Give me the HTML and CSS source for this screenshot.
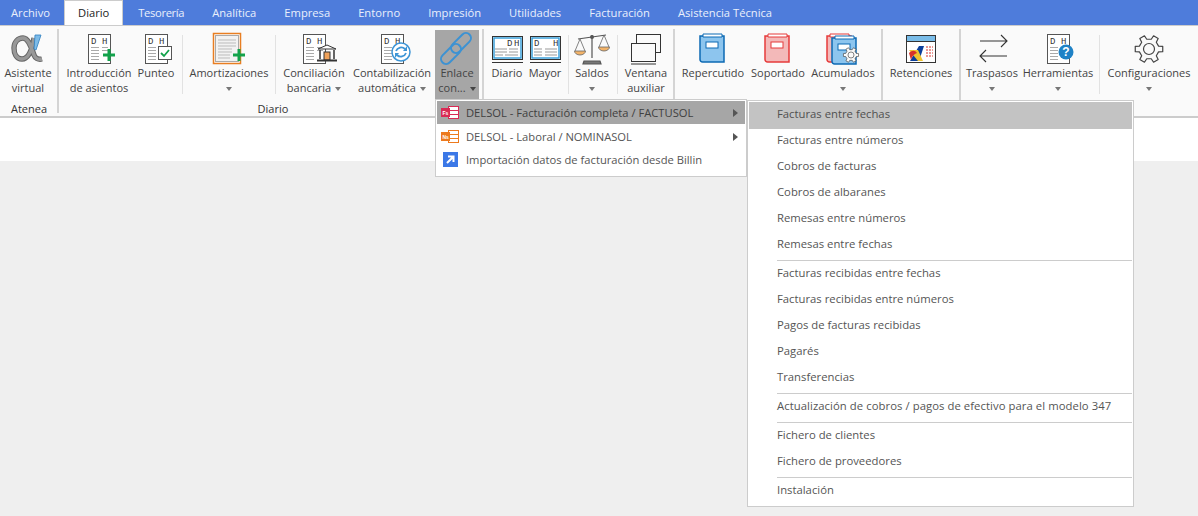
FILE: index.html
```html
<!DOCTYPE html>
<html lang="es">
<head>
<meta charset="utf-8">
<title>Diario</title>
<link rel="stylesheet" href="styles.css">
</head>
<body>
<svg class="defs" width="0" height="0" aria-hidden="true">
  <defs>
    <g id="doc">
      <rect x="0.5" y="0.5" width="22" height="29" fill="#fff" stroke="#555"/>
      <text x="3" y="9.5" class="dh">D</text>
      <text x="14" y="9.5" class="dh">H</text>
      <path d="M3 13.5h8M3 16.5h8M3 19.5h8M3 22.5h8M3 25.5h8M14 13.5h6M14 16.5h6" stroke="#aaa" fill="none"/>
    </g>
    <g id="wline">
      <rect x="0.5" y="0.5" width="30" height="23" fill="#fff" stroke="#333"/>
      <rect x="2" y="2" width="27" height="20" fill="#fff" stroke="#2f9bd8" stroke-width="1.4"/>
      <path d="M0 26.5h31" stroke="#333" fill="none"/>
    </g>
    <g id="book">
      <path d="M1 3h24v26H3.500a2.500 2.500 0 0 1-2.500-2.500z" stroke-width="1.500"/>
      <path d="M4 1h19v3H4z" fill="#fff" stroke-width="1"/>
      <rect x="7" y="9" width="12" height="6" fill="#fff" stroke-width="1"/>
    </g>
    <g id="gear">
      <path d="M9.56-2.92L13.74-2.67L13.74 2.67L9.56 2.92L7.31 6.82L9.18 10.57L4.56 13.23L2.25 9.74L-2.25 9.74L-4.56 13.23L-9.18 10.57L-7.31 6.82L-9.56 2.92L-13.74 2.67L-13.74-2.67L-9.56-2.92L-7.31-6.82L-9.18-10.57L-4.56-13.23L-2.25-9.74L2.25-9.74L4.56-13.23L9.18-10.57L7.31-6.82z" fill="#fafafa" stroke="#444" stroke-width="1.200" stroke-linejoin="round"/>
      <circle r="5.500" fill="#fafafa" stroke="#444" stroke-width="1.200"/>
    </g>
    <g id="app">
      <rect x="7.500" y="1.500" width="10" height="12" fill="#fff"/>
      <path d="M8 5.500h9M8 9.500h9" fill="none"/>
      <rect x="0.500" y="3.500" width="8" height="8"/>
    </g>
  </defs>
</svg>

<nav class="tabs">
  <a class="tab tab-first">Archivo</a>
  <a class="tab tab-active">Diario</a>
  <a class="tab tab-tight">Tesorería</a>
  <a class="tab">Analítica</a>
  <a class="tab">Empresa</a>
  <a class="tab">Entorno</a>
  <a class="tab">Impresión</a>
  <a class="tab">Utilidades</a>
  <a class="tab">Facturación</a>
  <a class="tab">Asistencia Técnica</a>
</nav>

<section class="ribbon">
  <div class="group g-atenea">
    <div class="btns">
      <div class="btn w54">
        <svg class="ico" viewBox="0 0 40 35"><path d="M26 8C24 20 20 29 14 29C8 29 6 23 6 18C6 12 10 8 15 8C21 8 24 20 26 25C27 28 30 30 34 29" fill="none" stroke="#666" stroke-width="5.400"/><path d="M26 8C24 20 20 29 14 29C8 29 6 23 6 18C6 12 10 8 15 8C21 8 24 20 26 25C27 28 30 30 34 29" fill="none" stroke="#999" stroke-width="3.400"/><path d="M27 5h6l-5 15-2-1z" fill="#7dbbe8" stroke="#2d7fc0" stroke-width=".8"/></svg>
        <span class="lbl">Asistente<br>virtual</span>
      </div>
    </div>
    <div class="glabel">Atenea</div>
  </div>

  <div class="group g-diario">
    <div class="btns">
      <div class="btn w70">
        <svg class="ico" viewBox="0 0 40 35"><use href="#doc" x="9" y="4"/><path d="M30 19v12M24 25h12" stroke="#12a24b" stroke-width="3" fill="none"/></svg>
        <span class="lbl">Introducción<br>de asientos</span>
      </div>
      <div class="btn w44">
        <svg class="ico" viewBox="0 0 40 35"><use href="#doc" x="9" y="4"/><rect x="22.500" y="16.500" width="13" height="13" fill="#fff" stroke="#555"/><path d="M25 23l3 3 5-6" stroke="#12a24b" stroke-width="1.800" fill="none"/></svg>
        <span class="lbl">Punteo</span>
      </div>
      <i class="thin s-a"></i>
      <div class="btn w92">
        <svg class="ico" viewBox="0 0 40 35"><rect x="4.500" y="3.500" width="27" height="30" fill="#fff" stroke="#e87e22" stroke-width="1.500"/><rect x="6.500" y="5.500" width="23" height="26" fill="#f2f2f2" stroke="#aaa"/><path d="M9 10h18M9 13h18M9 16h18M9 19h14M9 22h14M9 25h12M9 28h12" stroke="#bbb" fill="none"/><path d="M30 19v12M24 25h12" stroke="#12a24b" stroke-width="3" fill="none"/></svg>
        <span class="lbl">Amortizaciones<br><i class="caret"></i></span>
      </div>
      <i class="thin s-b"></i>
      <div class="btn w72">
        <svg class="ico" viewBox="0 0 40 35"><use href="#doc" x="9" y="4"/><path d="M24 19l9-4 9 4z" fill="#fff" stroke="#333"/><path d="M26 20v9M40 20v9" stroke="#333" stroke-width="1.500"/><rect x="30" y="22" width="6" height="8" fill="#f0a25a" stroke="#333"/><path d="M23 30.500h20" stroke="#333" stroke-width="2"/></svg>
        <span class="lbl">Conciliación<br>bancaria<i class="caret caret-in"></i></span>
      </div>
      <div class="btn w84">
        <svg class="ico" viewBox="0 0 40 35"><use href="#doc" x="9" y="4"/><circle cx="29" cy="22" r="9" fill="#fff" stroke="#3d95d6" stroke-width="1.500"/><path d="M24 21a5.500 5.500 0 0 1 9-2M34 23a5.500 5.500 0 0 1-9 2" stroke="#3d95d6" stroke-width="1.800" fill="none"/><path d="M35 16v5h-4zM23 28v-5h4z" fill="#3d95d6"/></svg>
        <span class="lbl">Contabilización<br>automática<i class="caret caret-in"></i></span>
      </div>
      <div class="btn w44 btn-open">
        <svg class="ico" viewBox="0 0 40 35"><g fill="none" stroke="#3c92d3" stroke-width="2"><rect x="19" y="1" width="10" height="24" rx="5" transform="rotate(45 24 13)"/><rect x="9" y="12" width="10" height="24" rx="5" transform="rotate(45 14 24)"/></g></svg>
        <span class="lbl">Enlace<br>con...<i class="caret caret-in caret-dark"></i></span>
      </div>
    </div>
    <div class="glabel">Diario</div>
  </div>

  <div class="group g-libros">
    <div class="btns">
      <div class="btn w36">
        <svg class="ico" viewBox="0 0 40 35"><use href="#wline" x="5" y="6"/><text x="20" y="16" class="dh">D</text><text x="27" y="16" class="dh">H</text><path d="M8 19h12M8 22h12M8 25h8M22 19h9M22 22h9M18 25h13" stroke="#999" fill="none"/></svg>
        <span class="lbl">Diario</span>
      </div>
      <div class="btn w40">
        <svg class="ico" viewBox="0 0 40 35"><use href="#wline" x="5" y="6"/><text x="9" y="16" class="dh">D</text><text x="28" y="16" class="dh">H</text><path d="M9 19h8M9 22h8M9 25h8M20 19h12M20 22h12M20 25h12" stroke="#999" fill="none"/></svg>
        <span class="lbl">Mayor</span>
      </div>
      <i class="thin s-c"></i>
      <div class="btn w42">
        <svg class="ico" viewBox="0 0 40 35"><path d="M20 5v23M6 9l28-4M12 31h16l1 3H11z" stroke="#555" stroke-width="1.200" fill="#777"/><circle cx="20" cy="7" r="2" fill="#555"/><path d="M8 9l-5 12M8 9l5 12M32 5l-5 12M32 5l5 12" stroke="#666" fill="none" stroke-width=".8"/><path d="M2.500 21h11a5.500 4 0 0 1-11 0zM26.500 17h11a5.500 4 0 0 1-11 0z" fill="#f3b368" stroke="#666" stroke-width=".8"/></svg>
        <span class="lbl">Saldos<br><i class="caret"></i></span>
      </div>
      <i class="thin s-d"></i>
      <div class="btn w52">
        <svg class="ico" viewBox="0 0 40 35"><rect x="10.500" y="4.500" width="24" height="18" fill="#fafafa" stroke="#333"/><rect x="5.500" y="13.500" width="24" height="18" fill="#fafafa" stroke="#333"/><path d="M5 34h25" stroke="#333" fill="none"/></svg>
        <span class="lbl">Ventana<br>auxiliar</span>
      </div>
    </div>
  </div>

  <div class="group g-iva">
    <div class="btns">
      <div class="btn w70">
        <svg class="ico" viewBox="0 0 40 35"><use href="#book" x="6" y="3" fill="#8dc5ee" stroke="#0d6ab4"/></svg>
        <span class="lbl">Repercutido</span>
      </div>
      <div class="btn w60">
        <svg class="ico" viewBox="0 0 40 35"><use href="#book" x="6" y="3" fill="#f3b9b9" stroke="#e63b3b"/></svg>
        <span class="lbl">Soportado</span>
      </div>
      <div class="btn w70">
        <svg class="ico" viewBox="0 0 40 35"><use href="#book" x="3" y="3" fill="#f3b9b9" stroke="#e63b3b"/><use href="#book" x="8" y="5" fill="#8dc5ee" stroke="#0d6ab4"/><use href="#gear" transform="translate(28 25) scale(.55)"/></svg>
        <span class="lbl">Acumulados<br><i class="caret"></i></span>
      </div>
    </div>
  </div>

  <div class="group g-ret">
    <div class="btns">
      <div class="btn w72">
        <svg class="ico" viewBox="0 0 40 35"><rect x="5.500" y="5.500" width="29" height="27" fill="#fff" stroke="#333"/><rect x="6" y="6" width="28" height="5" fill="#79bce8"/><path d="M6 11.500h28" stroke="#333" fill="none"/><path d="M9 31l9-15h5l-5 15z" fill="#0b3f9c"/><path d="M8 20h9l5 11h-5z" fill="#f0c430"/><path d="M8 23c3-3 6-3 8 0-3 1-5 3-6 7z" fill="#d8322a"/><path d="M25 17h7M25 20h7M25 23h7M25 26h7" stroke="#d8322a" stroke-dasharray="2 1" fill="none"/></svg>
        <span class="lbl">Retenciones</span>
      </div>
    </div>
  </div>

  <div class="group g-tools">
    <div class="btns">
      <div class="btn w60">
        <svg class="ico" viewBox="0 0 40 35"><path d="M8 11h27M29 5l6 6-6 6M35 26H8M14 20l-6 6 6 6" fill="none" stroke="#333" stroke-width="1.100"/></svg>
        <span class="lbl">Traspasos<br><i class="caret"></i></span>
      </div>
      <div class="btn w72">
        <svg class="ico" viewBox="0 0 40 35"><use href="#doc" x="9" y="4"/><circle cx="28" cy="22" r="7.500" fill="#1f82c6"/><text x="28" y="26" class="help">?</text></svg>
        <span class="lbl">Herramientas<br><i class="caret"></i></span>
      </div>
      <i class="thin s-e"></i>
      <div class="btn w92">
        <svg class="ico" viewBox="0 0 40 35"><use href="#gear" transform="translate(20 19)"/></svg>
        <span class="lbl">Configuraciones<br><i class="caret"></i></span>
      </div>
    </div>
  </div>
</section>

<div class="strip"></div>
<main class="workspace"></main>

<ul class="menu menu-one">
  <li class="item item-on">
    <svg class="mico" viewBox="0 0 20 16"><use href="#app" x="1" y="0" fill="#d92b55" stroke="#d92b55"/><text x="2.500" y="10" class="mini">Fs</text></svg>
    <span>DELSOL - Facturación completa / FACTUSOL</span><i class="arrow"></i>
  </li>
  <li class="item">
    <svg class="mico" viewBox="0 0 20 16"><use href="#app" x="1" y="0" fill="#ed7a1e" stroke="#ed7a1e"/><text x="2.500" y="10" class="mini">Ns</text></svg>
    <span>DELSOL - Laboral / NOMINASOL</span><i class="arrow"></i>
  </li>
  <li class="item item-last">
    <svg class="mico" viewBox="0 0 20 16"><rect x="3" y="0" width="15" height="15" fill="#3b78e7"/><path d="M7 11l6-6M8 4.500h5.500V10" stroke="#fff" stroke-width="2" fill="none"/></svg>
    <span>Importación datos de facturación desde Billin</span>
  </li>
</ul>

<ul class="menu menu-two">
  <li class="sub sub-on">Facturas entre fechas</li>
  <li class="sub">Facturas entre números</li>
  <li class="sub">Cobros de facturas</li>
  <li class="sub">Cobros de albaranes</li>
  <li class="sub">Remesas entre números</li>
  <li class="sub">Remesas entre fechas</li>
  <li class="rule"></li>
  <li class="sub">Facturas recibidas entre fechas</li>
  <li class="sub">Facturas recibidas entre números</li>
  <li class="sub">Pagos de facturas recibidas</li>
  <li class="sub">Pagarés</li>
  <li class="sub">Transferencias</li>
  <li class="rule"></li>
  <li class="sub sub-wide">Actualización de cobros / pagos de efectivo para el modelo 347</li>
  <li class="rule"></li>
  <li class="sub">Fichero de clientes</li>
  <li class="sub">Fichero de proveedores</li>
  <li class="rule"></li>
  <li class="sub">Instalación</li>
</ul>
</body>
</html>
```
FILE: styles.css
```css
* { box-sizing: border-box; }
html, body { margin: 0; padding: 0; height: 516px; overflow: hidden; }
body {
  position: relative;
  display: flex;
  flex-direction: column;
  font-family: "Open Sans", "Noto Sans", sans-serif;
  font-size: 11px;
  color: #444;
  background: #efefef;
}
.defs { position: absolute; }
.dh { font: 9px "Liberation Mono", monospace; fill: #333; }
.mini { font: bold 5px "Liberation Sans", sans-serif; fill: #fff; }
.help { font: bold 12px "Liberation Sans", sans-serif; fill: #fff; text-anchor: middle; }

.tabs { display: flex; height: 25px; background: #4e7cdb; flex: none; font-size: 11.2px; }
.tab { padding: 0 14px; line-height: 25px; color: #eaf0fb; white-space: nowrap; }
.tab-first { padding: 0 14px 0 11px; }
.tab-active { padding: 0 13px; background: #fff; color: #222; border: 1px solid #ccc; border-bottom: 0; line-height: 24px; }
.tab-tight { padding-left: 15px; letter-spacing: -.35px; }

.ribbon { display: flex; height: 93px; background: #fafafa; border-top: 1px solid #ccc; border-bottom: 2px solid #ccc; flex: none; }
.group { display: flex; flex-direction: column; position: relative; height: 90px; border-right: 2px solid transparent; }
.group::after { content: ""; position: absolute; right: -2px; top: 3px; bottom: 3px; width: 2px; background: #d4d4d4; }
.g-atenea { width: 59px; padding-left: 1px; }
.g-diario { width: 425px; padding-left: 5px; }
.g-libros { width: 191px; padding-left: 5px; }
.g-iva { width: 208px; padding-left: 3px; }
.g-ret { width: 78px; padding-left: 2px; }
.g-tools { width: 120px; flex: 1; padding-left: 1px; }
.g-tools::after { display: none; }
.btns { display: flex; height: 75px; }
.glabel { text-align: center; line-height: 15px; color: #333; }

.btn { display: flex; flex-direction: column; align-items: center; height: 70px; padding-top: 4px; white-space: nowrap; flex: none; }
.ico { width: 40px; height: 35px; overflow: visible; flex: none; }
.lbl { text-align: center; line-height: 15px; display: block; }
.w36 { width: 36px; } .w40 { width: 40px; } .w42 { width: 42px; } .w44 { width: 44px; }
.w52 { width: 52px; } .w54 { width: 54px; } .w60 { width: 60px; } .w70 { width: 70px; }
.w72 { width: 72px; } .w84 { width: 84px; } .w92 { width: 92px; }
.btn-open { background: #a6a6a6; margin: 4px 0 0 1px; padding-top: 0; height: 69px; }

.caret { display: inline-block; width: 0; height: 0; border: 3.500px solid transparent; border-top: 4px solid #777; border-bottom: 0; vertical-align: middle; }
.caret-in { margin-left: 4px; }
.caret-dark { border-top-color: #444; }

.thin { display: block; width: 1px; height: 59px; margin-top: 9px; background: #e2e2e2; flex: none; }
.s-a { margin-left: 4px; }
.s-b { margin-right: 2px; }
.s-c { margin: 9px 2px 0 3px; }
.s-d { margin: 9px 2px 0 4px; }
.s-e { margin: 9px 3px 0 5px; }

.strip { height: 43px; background: #fff; flex: none; }
.workspace { flex: 1; background: #efefef; }

.menu { position: absolute; margin: 0; padding: 1px; list-style: none; background: #fff; border: 1px solid #ccc; color: #555; }
.menu-one { left: 435px; top: 99px; width: 312px; height: 78px; font-size: 11.2px; }
.menu-two { left: 747px; top: 100px; width: 387px; height: 407px; font-size: 11.3px; }
.item { display: flex; align-items: center; height: 23px; padding-left: 3px; white-space: nowrap; position: relative; }
.item + .item { margin-top: 1px; }
.item + .item-last { margin-top: 0; }
.item-on { background: #a6a6a6; color: #404040; }
.mico { width: 20px; height: 16px; margin-right: 6px; flex: none; }
.arrow { position: absolute; left: 296px; top: 8px; width: 0; height: 0; border: 4px solid transparent; border-left: 5px solid #555; border-right: 0; }
.sub { height: 26px; line-height: 23px; padding-left: 28px; white-space: nowrap; }
.sub-on { background: #c3c3c3; color: #505050; box-shadow: 0 1px #c3c3c3; }
.sub-wide { letter-spacing: .06px; }
.rule { height: 3px; margin-left: 28px; border-bottom: 1px solid #ccc; }
```
